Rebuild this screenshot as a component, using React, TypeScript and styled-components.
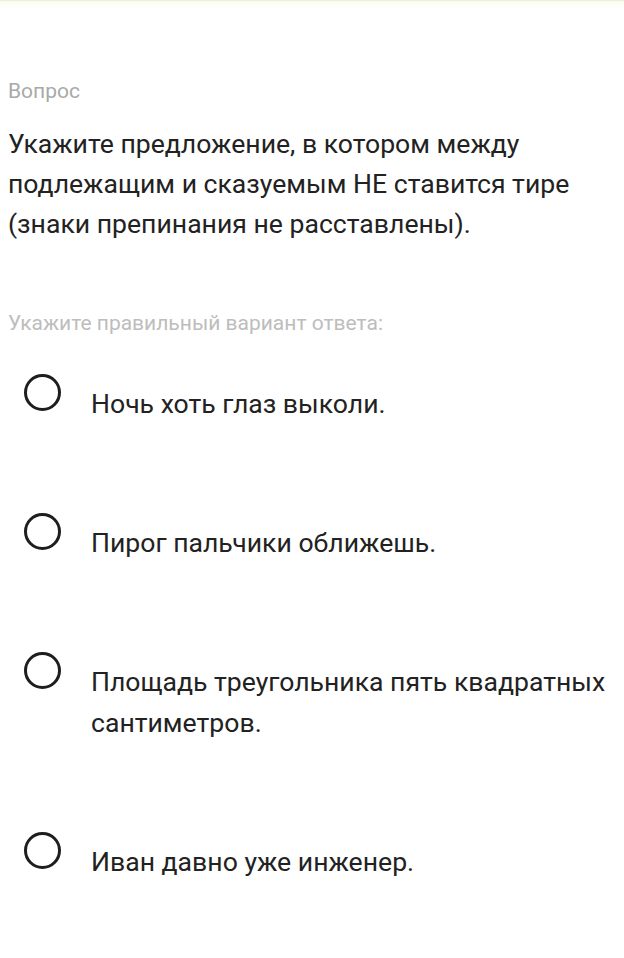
import React from "react";
import styled, { createGlobalStyle } from "styled-components";

const Global = createGlobalStyle`
  html, body { margin: 0; padding: 0; background: #ffffff; }
  body { font-family: Roboto, "Noto Sans", sans-serif; -webkit-font-smoothing: antialiased; }
`;

const TopStrip = styled.div`
  height: 8px;
  border-top: 1px solid #eef0dc;
  background: linear-gradient(#fbfcf0, #ffffff);
`;

const Page = styled.main`
  padding: 70px 8px 40px 8px;
  display: flex;
  flex-direction: column;
`;

const Caption = styled.div<{ $tone: string; $mt: number }>`
  font-size: 21px;
  line-height: 24px;
  color: ${(p) => p.$tone};
  margin-top: ${(p) => p.$mt}px;
`;

const Question = styled.p`
  margin: 21px 0 0 0;
  font-size: 26.6px;
  line-height: 40px;
  color: #222222;
`;

const Options = styled.div`
  margin-top: 39px;
  display: flex;
  flex-direction: column;
  gap: 89px;
`;

const Row = styled.label`
  display: flex;
  align-items: flex-start;
  padding-left: 16px;
  gap: 30px;
`;

const Radio = styled.span`
  flex: 0 0 auto;
  width: 37px;
  height: 37px;
  box-sizing: border-box;
  border: 3.5px solid #1e1e1e;
  border-radius: 50%;
`;

const OptionText = styled.span`
  margin-top: 9px;
  font-size: 26.6px;
  line-height: 41px;
  color: #222222;
`;

const options = [
  "Ночь хоть глаз выколи.",
  "Пирог пальчики оближешь.",
  "Площадь треугольника пять квадратных сантиметров.",
  "Иван давно уже инженер.",
];

export default function App() {
  return (
    <>
      <Global />
      <TopStrip />
      <Page>
        <Caption $tone="#a9a9a9" $mt={0}>Вопрос</Caption>
        <Question>
          Укажите предложение, в котором между подлежащим и сказуемым НЕ ставится тире
          (знаки препинания не расставлены).
        </Question>
        <Caption $tone="#bdbdbd" $mt={67}>Укажите правильный вариант ответа:</Caption>
        <Options>
          {options.map((o) => (
            <Row key={o}>
              <Radio />
              <OptionText>{o}</OptionText>
            </Row>
          ))}
        </Options>
      </Page>
    </>
  );
}
